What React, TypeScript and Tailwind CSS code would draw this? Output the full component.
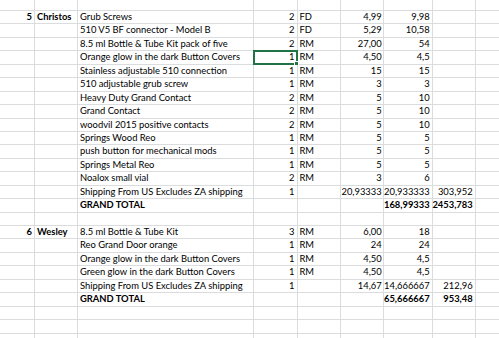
import React from 'react';

type Row = {
  a?: string;
  b?: string;
  c?: string;
  d?: string;
  e?: string;
  f?: string;
  g?: string;
  h?: string;
  bold?: boolean;
  selected?: boolean;
};

const rows: Row[] = [
  { a: '5', b: 'Christos', c: 'Grub Screws', d: '2', e: 'FD', f: '4,99', g: '9,98' },
  { c: '510 V5 BF connector - Model B', d: '2', e: 'FD', f: '5,29', g: '10,58' },
  { c: '8.5 ml Bottle & Tube Kit pack of five', d: '2', e: 'RM', f: '27,00', g: '54' },
  { c: 'Orange glow in the dark Button Covers', d: '1', e: 'RM', f: '4,50', g: '4,5', selected: true },
  { c: 'Stainless adjustable 510 connection', d: '1', e: 'RM', f: '15', g: '15' },
  { c: '510 adjustable grub screw', d: '1', e: 'RM', f: '3', g: '3' },
  { c: 'Heavy Duty Grand Contact', d: '2', e: 'RM', f: '5', g: '10' },
  { c: 'Grand Contact', d: '2', e: 'RM', f: '5', g: '10' },
  { c: 'woodvil 2015 positive contacts', d: '2', e: 'RM', f: '5', g: '10' },
  { c: 'Springs Wood Reo', d: '1', e: 'RM', f: '5', g: '5' },
  { c: 'push button for mechanical mods', d: '1', e: 'RM', f: '5', g: '5' },
  { c: 'Springs Metal Reo', d: '1', e: 'RM', f: '5', g: '5' },
  { c: 'Noalox small vial', d: '2', e: 'RM', f: '3', g: '6' },
  { c: 'Shipping From US Excludes ZA shipping', d: '1', f: '20,93333', g: '20,933333', h: '303,952' },
  { c: 'GRAND TOTAL', g: '168,99333', h: '2453,783', bold: true },
  {},
  { a: '6', b: 'Wesley', c: '8.5 ml Bottle & Tube Kit', d: '3', e: 'RM', f: '6,00', g: '18' },
  { c: 'Reo Grand Door orange', d: '1', e: 'RM', f: '24', g: '24' },
  { c: 'Orange glow in the dark Button Covers', d: '1', e: 'RM', f: '4,50', g: '4,5' },
  { c: 'Green glow in the dark Button Covers', d: '1', e: 'RM', f: '4,50', g: '4,5' },
  { c: 'Shipping From US Excludes ZA shipping', d: '1', f: '14,67', g: '14,666667', h: '212,96' },
  { c: 'GRAND TOTAL', g: '65,666667', h: '953,48', bold: true },
  {},
  {},
  {},
];

const cell = 'h-full border-r border-b border-[#dadcdd] flex items-end pb-[2px] whitespace-nowrap';

function SheetRow({ r, top }: { r: Row; top?: boolean }) {
  const h = top ? 'h-[11px]' : 'h-[13.45px]';
  return (
    <div className={`flex ${h}`}>
      <div className={`${cell} w-[35px] justify-end pr-[2px] font-bold`}>{r.a}</div>
      <div className={`${cell} w-[43px] pl-[2px] font-bold`}>{r.b}</div>
      <div className={`${cell} w-[176px] pl-[2px] ${r.bold ? 'font-bold' : ''}`}>{r.c}</div>
      <div className={`${cell} w-[43.5px] justify-end pr-[2px] relative`}>
        {r.d}
        {r.selected && (
          <div className="absolute -left-px -top-px -right-px -bottom-px border-2 border-[#217346]">
            <div className="absolute -right-[3px] -bottom-[3px] w-[5px] h-[5px] bg-[#217346] border border-white" />
          </div>
        )}
      </div>
      <div className={`${cell} w-[43.5px] pl-[2px]`}>{r.e}</div>
      <div className={`${cell} w-[42.7px] justify-end pr-[1px]`}>{r.f}</div>
      <div className={`${cell} w-[49px] justify-end pr-[2px] ${r.bold ? 'font-bold' : ''}`}>{r.g}</div>
      <div className={`${cell} w-[43px] justify-end pr-[2px] ${r.bold ? 'font-bold' : ''}`}>{r.h}</div>
      <div className="h-full flex-1 border-b border-[#dadcdd]" />
    </div>
  );
}

export default function App() {
  return (
    <div
      className="w-[499px] h-[338px] overflow-hidden bg-white text-[9.4px] leading-none text-black"
      style={{ fontFamily: 'Lato, "Liberation Sans", sans-serif' }}
    >
      <SheetRow r={{}} top />
      {rows.map((r, i) => (
        <SheetRow key={i} r={r} />
      ))}
    </div>
  );
}
